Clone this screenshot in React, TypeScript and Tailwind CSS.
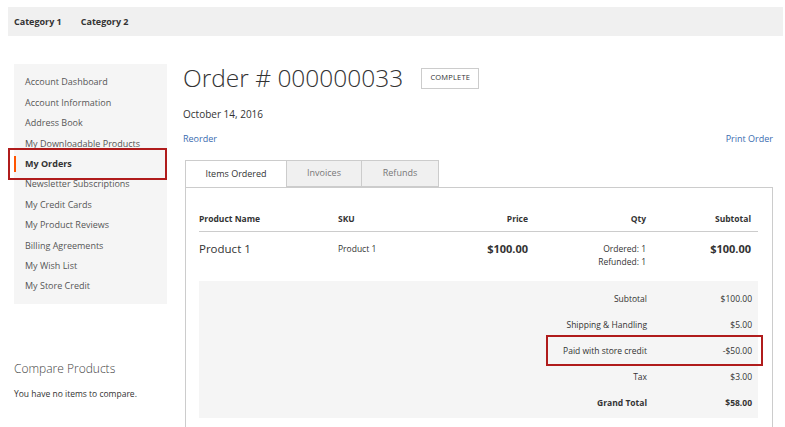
const navItems = [
  'Account Dashboard',
  'Account Information',
  'Address Book',
  'My Downloadable Products',
  'My Orders',
  'Newsletter Subscriptions',
  'My Credit Cards',
  'My Product Reviews',
  'Billing Agreements',
  'My Wish List',
  'My Store Credit',
]

const totals = [
  { label: 'Subtotal', value: '$100.00' },
  { label: 'Shipping & Handling', value: '$5.00' },
  { label: 'Paid with store credit', value: '-$50.00', marked: true },
  { label: 'Tax', value: '$3.00' },
  { label: 'Grand Total', value: '$58.00', bold: true },
]

const App = () => {
  return (
    <div className="w-[785px] h-[427px] overflow-hidden bg-white text-[#333] font-['Open_Sans',sans-serif]">
      {/* top category bar */}
      <nav className="ml-2 mr-[2px] mt-[7px] h-[29px] bg-[#f0f0f0] flex items-center gap-[19px] px-[6px] text-[9px] font-bold text-[#333]">
        <span>Category 1</span>
        <span>Category 2</span>
      </nav>

      <div className="flex mt-[28px]">
        {/* sidebar */}
        <aside className="ml-[14px] w-[153px] shrink-0">
          <ul className="bg-[#f5f5f5] py-[8px] text-[9px] text-[#555]">
            {navItems.map((item) =>
              item === 'My Orders' ? (
                <li key={item} className="relative h-[20.4px] flex items-center pl-[11px] font-bold text-[#333]">
                  <span className="absolute left-0 top-[2px] bottom-[2px] w-[2px] bg-[#ff5501]" />
                  {item}
                  <span className="absolute -left-[6px] right-0 -top-[6px] bottom-[-6px] border-2 border-[#b01c1c]" />
                </li>
              ) : (
                <li key={item} className="h-[20.4px] flex items-center pl-[11px] whitespace-nowrap overflow-hidden">
                  {item}
                </li>
              ),
            )}
          </ul>
          <div className="mt-[59px]">
            <h3 className="text-[12px] font-light text-[#444] leading-none">Compare Products</h3>
            <p className="mt-[13px] text-[8.5px] text-[#333]">You have no items to compare.</p>
          </div>
        </aside>

        {/* main content */}
        <main className="ml-[16px] w-[590px]">
          <div className="flex items-center gap-[18px] -mt-[2px]">
            <h1 className="text-[24.5px] font-light text-[#333] leading-[32px] whitespace-nowrap">Order # 000000033</h1>
            <span className="border border-[#ccc] h-[21px] w-[58px] flex items-center justify-center text-[7.5px] text-[#333] tracking-wide">
              COMPLETE
            </span>
          </div>
          <div className="mt-[13px] text-[10px] text-[#333]">October 14, 2016</div>
          <div className="mt-[10px] flex justify-between text-[9px] text-[#3a6cb0]">
            <span>Reorder</span>
            <span>Print Order</span>
          </div>

          {/* tabs */}
          <div className="mt-[14px] flex ml-[2px] text-[9px]">
            <div className="w-[102px] h-[27px] bg-white border border-b-0 border-[#ccc] flex items-center justify-center text-[#333] relative z-10 -mb-px">
              Items Ordered
            </div>
            <div className="w-[75px] h-[27px] bg-[#f0f0f0] border border-l-0 border-[#ccc] flex items-center justify-center text-[#777]">
              Invoices
            </div>
            <div className="w-[77px] h-[27px] bg-[#f0f0f0] border border-l-0 border-[#ccc] flex items-center justify-center text-[#777]">
              Refunds
            </div>
          </div>

          <div className="ml-[2px] w-[588px] h-[250px] border border-[#ccc] pt-[20px] px-[13px]">
            <div className="w-[559px]">
              <div className="flex text-[8.5px] font-bold text-[#333] h-[24px] items-center border-b border-[#ccc]">
                <span className="w-[139px]">Product Name</span>
                <span className="w-[100px]">SKU</span>
                <span className="w-[90px] text-right">Price</span>
                <span className="w-[118px] text-right">Qty</span>
                <span className="w-[105px] text-right">Subtotal</span>
              </div>
              <div className="flex h-[49px] pt-[9px]">
                <span className="w-[139px] text-[11.5px] text-[#333] leading-[16px]">Product 1</span>
                <span className="w-[100px] text-[8.5px] leading-[16px]">Product 1</span>
                <span className="w-[90px] text-right text-[11px] font-bold leading-[16px]">$100.00</span>
                <span className="w-[118px] text-right text-[8.5px] leading-[13px] pt-[1px]">
                  Ordered: 1
                  <br />
                  Refunded: 1
                </span>
                <span className="w-[105px] text-right text-[11px] font-bold leading-[16px]">$100.00</span>
              </div>
              <div className="bg-[#f5f5f5] h-[137px] pt-[6px]">
                {totals.map((t) => (
                  <div key={t.label} className={`relative flex h-[26px] items-center text-[8.5px] ${t.bold ? 'font-bold' : ''}`}>
                    <span className="w-[448px] text-right">{t.label}</span>
                    <span className="w-[105px] text-right">{t.value}</span>
                    {t.marked && (
                      <span className="absolute left-[347px] w-[217px] top-[-4px] bottom-[-1px] border-2 border-[#b01c1c]" />
                    )}
                  </div>
                ))}
              </div>
            </div>
          </div>
        </main>
      </div>
    </div>
  )
}

export default App
